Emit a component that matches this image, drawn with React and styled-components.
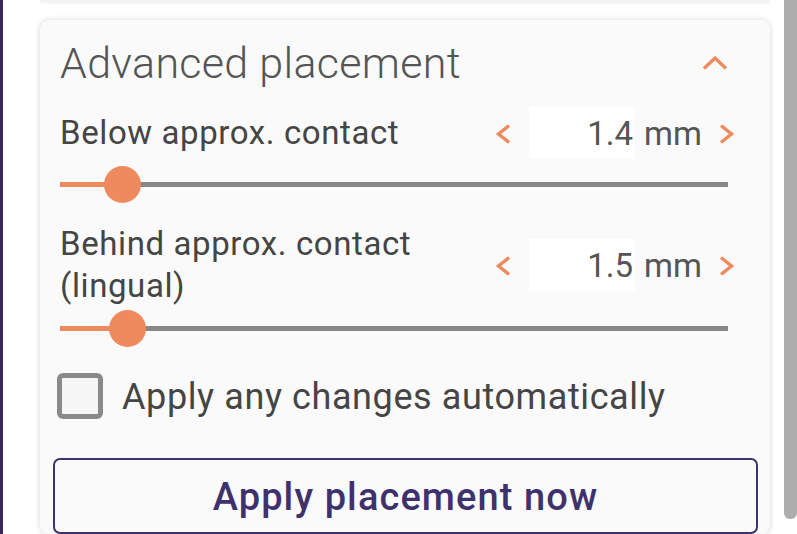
import styled, { createGlobalStyle } from 'styled-components';

const GlobalStyle = createGlobalStyle`
  html, body {
    margin: 0;
    padding: 0;
    background: #ffffff;
    font-family: Roboto, 'Noto Sans', sans-serif;
  }
  * { box-sizing: border-box; }
`;

const ORANGE = '#ef8a5e';
const PURPLE = '#3f326c';

const Screen = styled.div`
  display: flex;
  width: 797px;
  height: 534px;
  overflow: hidden;
  border-left: 3px solid #34285a;
`;

const Panel = styled.div`
  flex: 1;
  display: flex;
  flex-direction: column;
  padding: 0 14px 0 37px;
`;

const PrevCardEdge = styled.div`
  flex-shrink: 0;
  height: 2px;
  background: #f3f3f3;
  box-shadow: 0 1px 3px rgba(0, 0, 0, 0.08);
  border-radius: 0 0 8px 8px;
`;

const Card = styled.section`
  flex: 1 0 auto;
  margin-top: 18px;
  background: #fafafa;
  border-radius: 9px;
  box-shadow: 0 0 5px 1px rgba(0, 0, 0, 0.12);
  padding: 18px 35px 0 20px;
  display: flex;
  flex-direction: column;
`;

const Header = styled.header`
  display: flex;
  align-items: center;
  justify-content: space-between;
  height: 50px;
`;

const Title = styled.h2`
  margin: 0;
  font-size: 43px;
  line-height: 50px;
  font-weight: 300;
  letter-spacing: 0.3px;
  color: #555555;
`;

const CollapseButton = styled.button`
  border: none;
  background: transparent;
  padding: 0;
  margin-right: 7px;
  display: flex;
  cursor: pointer;
`;

const Field = styled.div`
  display: flex;
  flex-direction: column;
  margin-top: ${(p) => p.$top}px;
`;

const Row = styled.div`
  display: flex;
  align-items: center;
  justify-content: space-between;
`;

const Label = styled.label`
  font-size: 33px;
  line-height: 42px;
  letter-spacing: 0.6px;
  color: #454545;
  max-width: 400px;
`;

const Stepper = styled.div`
  display: flex;
  align-items: center;
  height: 52px;
`;

const ArrowButton = styled.button`
  border: none;
  background: transparent;
  padding: 0;
  display: flex;
  cursor: pointer;
  margin: ${(p) => (p.$side === 'left' ? '2px 17px 0 0' : '2px 0 0 16px')};
`;

const ValueBox = styled.div`
  width: 106px;
  height: 52px;
  background: #ffffff;
  text-align: right;
  font-size: 33px;
  line-height: 54px;
  color: #555555;
  padding-right: 2px;
`;

const Unit = styled.span`
  height: 52px;
  font-size: 33px;
  line-height: 54px;
  color: #555555;
  margin-left: 9px;
`;

const Slider = styled.div`
  position: relative;
  height: 36px;
  margin: ${(p) => p.$top}px 7px 0 0;
  display: flex;
  align-items: center;
`;

const Track = styled.div`
  width: 100%;
  height: 5px;
  background: #888888;
`;

const Fill = styled.div`
  height: 100%;
  background: ${ORANGE};
`;

const Thumb = styled.div`
  position: absolute;
  top: 0;
  width: 37px;
  height: 37px;
  margin-left: -18px;
  border-radius: 50%;
  background: ${ORANGE};
`;

const CheckRow = styled.label`
  display: flex;
  align-items: center;
  gap: 19px;
  height: 46px;
  margin: 27px 0 0 -3px;
  cursor: pointer;
`;

const CheckBox = styled.span`
  width: 46px;
  height: 46px;
  border: 5px solid #8a8a8a;
  border-radius: 6px;
  background: #f6f6f6;
`;

const CheckText = styled.span`
  font-size: 36px;
  line-height: 46px;
  padding-top: 2px;
  letter-spacing: 0.6px;
  color: #454545;
`;

const ApplyButton = styled.button`
  margin: 39px -23px 0 -7px;
  height: 76px;
  border: 2px solid ${PURPLE};
  border-radius: 7px;
  background: #fafafa;
  color: ${PURPLE};
  font-family: Roboto, sans-serif;
  font-size: 38px;
  font-weight: 500;
  letter-spacing: 1.1px;
  padding-top: 2px;
  cursor: pointer;
`;

const ScrollTrack = styled.div`
  width: 13px;
  height: 100%;
`;

const ScrollThumb = styled.div`
  height: 519px;
  background: #adadad;
  border-radius: 0 0 6px 6px;
`;

const Chevron = ({ dir }) => (
  <svg width="17" height="22" viewBox="0 0 17 22">
    <path
      d={dir === 'left' ? 'M14 2.5 L3.5 11 L14 19.5' : 'M3 2.5 L13.5 11 L3 19.5'}
      fill="none"
      stroke={ORANGE}
      strokeWidth="3.4"
    />
  </svg>
);

const Caret = () => (
  <svg width="26" height="16" viewBox="0 0 26 16">
    <path d="M2 13.5 L13 3 L24 13.5" fill="none" stroke={ORANGE} strokeWidth="3.4" />
  </svg>
);

const MAX = 15;

const fields = [
  { id: 'below', label: 'Below approx. contact', value: 1.4, top: 19, sliderTop: 7 },
  { id: 'behind', label: 'Behind approx. contact (lingual)', value: 1.5, top: 21, sliderTop: 3 },
];

const App = () => {
  return (
    <>
      <GlobalStyle />
      <Screen>
        <Panel>
          <PrevCardEdge />
          <Card>
            <Header>
              <Title>Advanced placement</Title>
              <CollapseButton>
                <Caret />
              </CollapseButton>
            </Header>
            {fields.map((f) => {
              const pct = (f.value / MAX) * 100;
              return (
                <Field key={f.id} $top={f.top}>
                  <Row>
                    <Label>{f.label}</Label>
                    <Stepper>
                      <ArrowButton $side="left">
                        <Chevron dir="left" />
                      </ArrowButton>
                      <ValueBox>{f.value.toFixed(1)}</ValueBox>
                      <Unit>mm</Unit>
                      <ArrowButton $side="right">
                        <Chevron dir="right" />
                      </ArrowButton>
                    </Stepper>
                  </Row>
                  <Slider $top={f.sliderTop}>
                    <Track>
                      <Fill style={{ width: `${pct}%` }} />
                    </Track>
                    <Thumb style={{ left: `${pct}%` }} />
                  </Slider>
                </Field>
              );
            })}
            <CheckRow>
              <CheckBox />
              <CheckText>Apply any changes automatically</CheckText>
            </CheckRow>
            <ApplyButton>Apply placement now</ApplyButton>
          </Card>
        </Panel>
        <ScrollTrack>
          <ScrollThumb />
        </ScrollTrack>
      </Screen>
    </>
  );
};

export default App;
